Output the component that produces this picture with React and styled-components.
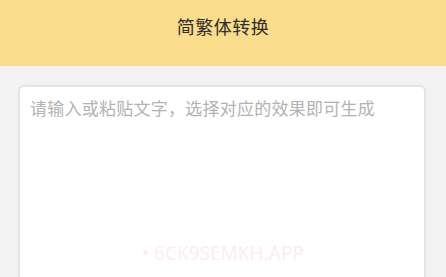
import React from "react";
import styled, { createGlobalStyle } from "styled-components";

const GlobalStyle = createGlobalStyle`
  html, body {
    margin: 0;
    padding: 0;
    background: #f3f3f3;
    overflow: hidden;
  }
  body {
    font-family: "Noto Sans CJK SC", "Noto Sans", sans-serif;
  }
`;

function App() {
  return (
    <Page>
      <GlobalStyle />
      <Header>
        <Title>简繁体转换</Title>
      </Header>

      <Body>
        <InputCard>
          <TextInput placeholder="请输入或粘贴文字，选择对应的效果即可生成" />
        </InputCard>
      </Body>

      <Watermark>• 6CK9SEMKH.APP</Watermark>
    </Page>
  );
}

export default App;

const Page = styled.div`
  position: relative;
  width: 446px;
  height: 277px;
  overflow: hidden;
  background: #f3f3f3;
`;

const Header = styled.header`
  height: 66px;
  background-color: #f9dc8c;
  display: flex;
  align-items: center;
  justify-content: center;
  padding-bottom: 15px;
  box-sizing: border-box;
`;

const Title = styled.h1`
  margin: 0;
  font-size: 18px;
  font-weight: 400;
  color: #2e2e2e;
  letter-spacing: 0.5px;
`;

const Body = styled.main`
  padding: 20px 21px 0 19px;
`;

const InputCard = styled.div`
  background: #ffffff;
  border: 1px solid #e2e2e2;
  border-radius: 5px;
  box-shadow: 0 0 3px rgba(0, 0, 0, 0.12);
  height: 240px;
  display: flex;
`;

const TextInput = styled.textarea`
  flex: 1;
  border: none;
  outline: none;
  resize: none;
  background: transparent;
  padding: 6px 10px;
  font-family: "Noto Sans CJK SC", "Noto Sans", sans-serif;
  font-size: 17px;
  letter-spacing: 0.25px;
  line-height: 30px;
  color: #333333;

  &::placeholder {
    color: #b3b3b3;
  }
`;

const Watermark = styled.div`
  position: absolute;
  left: 142px;
  top: 240px;
  font-family: "Noto Sans", sans-serif;
  font-size: 19px;
  color: #fdebf8;
  pointer-events: none;
  white-space: nowrap;
`;
